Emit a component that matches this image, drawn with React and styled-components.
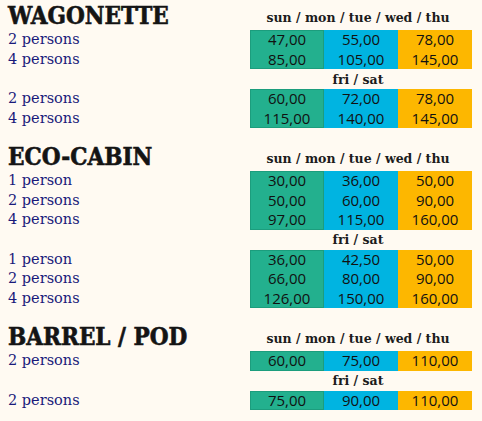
import React from "react";
import styled, { createGlobalStyle } from "styled-components";

const data = [
  {
    title: "WAGONETTE",
    periods: [
      {
        days: "sun / mon / tue / wed / thu",
        rows: [
          ["2 persons", "47,00", "55,00", "78,00"],
          ["4 persons", "85,00", "105,00", "145,00"],
        ],
      },
      {
        days: "fri / sat",
        rows: [
          ["2 persons", "60,00", "72,00", "78,00"],
          ["4 persons", "115,00", "140,00", "145,00"],
        ],
      },
    ],
  },
  {
    title: "ECO-CABIN",
    periods: [
      {
        days: "sun / mon / tue / wed / thu",
        rows: [
          ["1 person", "30,00", "36,00", "50,00"],
          ["2 persons", "50,00", "60,00", "90,00"],
          ["4 persons", "97,00", "115,00", "160,00"],
        ],
      },
      {
        days: "fri / sat",
        rows: [
          ["1 person", "36,00", "42,50", "50,00"],
          ["2 persons", "66,00", "80,00", "90,00"],
          ["4 persons", "126,00", "150,00", "160,00"],
        ],
      },
    ],
  },
  {
    title: "BARREL / POD",
    periods: [
      {
        days: "sun / mon / tue / wed / thu",
        rows: [["2 persons", "60,00", "75,00", "110,00"]],
      },
      {
        days: "fri / sat",
        rows: [["2 persons", "75,00", "90,00", "110,00"]],
      },
    ],
  },
];

const colors = ["#23b08e", "#00b4e1", "#fdb700"];

function App() {
  return (
    <>
      <GlobalStyle />
      <Page>
        {data.map((section) => (
          <Section key={section.title}>
            {section.periods.map((period, i) => (
              <Period key={i}>
                <Head $first={i === 0}>
                  <Title>{i === 0 ? section.title : ""}</Title>
                  <Days>{period.days}</Days>
                </Head>
                <Block>
                  <Labels>
                    {period.rows.map((r, j) => (
                      <Label key={j}>{r[0]}</Label>
                    ))}
                  </Labels>
                  <Table>
                    {colors.map((c, k) => (
                      <Column key={k} $bg={c} $first={k === 0}>
                        {period.rows.map((r, j) => (
                          <Price key={j}>{r[k + 1]}</Price>
                        ))}
                      </Column>
                    ))}
                  </Table>
                </Block>
              </Period>
            ))}
          </Section>
        ))}
      </Page>
    </>
  );
}

export default App;

///////////////////////////////////////////////////////////////////////////
//////  STYLED COMPONENTS

const GlobalStyle = createGlobalStyle`
  html, body {
    margin: 0;
    padding: 0;
    background: #fffaf2;
  }
`;

const Page = styled.div`
  width: 482px;
  padding: 3px 10px 0 8px;
  box-sizing: border-box;
  display: flex;
  flex-direction: column;
  gap: 16px;
`;

const Section = styled.div`
  display: flex;
  flex-direction: column;
`;

const Period = styled.div`
  display: flex;
  flex-direction: column;
`;

const Head = styled.div`
  display: flex;
  align-items: flex-end;
  justify-content: space-between;
  height: ${(p) => (p.$first ? "27px" : "20px")};
  padding-bottom: ${(p) => (p.$first ? "6px" : "3px")};
  box-sizing: border-box;
`;

const Title = styled.div`
  font-family: "DejaVu Serif Condensed", "DejaVu Serif", serif;
  font-weight: 900;
  font-size: 24px;
  line-height: 21px;
  color: #141414;
  -webkit-text-stroke: 0.6px #141414;
  margin-bottom: -2px;
`;

const Days = styled.div`
  width: 222px;
  padding-right: 6px;
  box-sizing: border-box;
  text-align: center;
  font-family: "DejaVu Serif", serif;
  font-weight: 600;
  font-size: 12.5px;
  line-height: 1;
  color: #1c1c1c;
`;

const Block = styled.div`
  display: flex;
  justify-content: space-between;
`;

const Labels = styled.div`
  display: flex;
  flex-direction: column;
`;

const Label = styled.div`
  height: 19.5px;
  line-height: 19.5px;
  font-family: "DejaVu Serif", serif;
  font-size: 14.5px;
  color: #1a1a7a;
`;

const Table = styled.div`
  width: 222px;
  display: grid;
  grid-template-columns: repeat(3, 1fr);
`;

const Column = styled.div`
  background: ${(p) => p.$bg};
  display: flex;
  flex-direction: column;
  box-shadow: ${(p) => (p.$first ? "inset 0 0 0 1px #1c9d7d" : "none")};
`;

const Price = styled.div`
  height: 19.5px;
  line-height: 19.5px;
  text-align: center;
  font-family: "Open Sans", "Liberation Sans", sans-serif;
  font-weight: 500;
  font-size: 15px;
  color: #111;
`;
